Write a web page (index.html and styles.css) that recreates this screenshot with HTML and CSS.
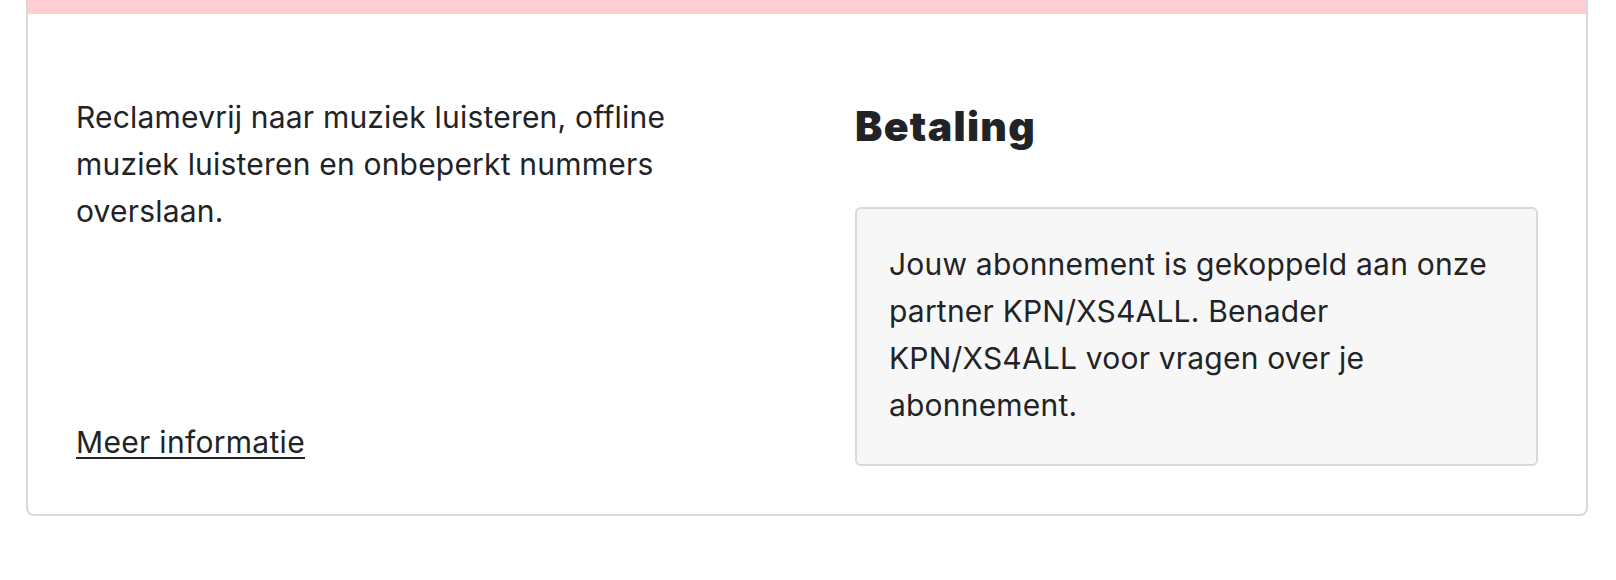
FILE: index.html
```html
<!DOCTYPE html>
<html lang="nl">
<head>
  <meta charset="UTF-8">
  <meta name="viewport" content="width=device-width, initial-scale=1.0">
  <title>Abonnement</title>
  <link rel="stylesheet" href="styles.css">
</head>
<body>

  <div class="page">
    <div class="card">
      <div class="card-band"></div>

      <div class="card-body">
        <div class="plan">
          <p class="plan-text">Reclamevrij naar muziek luisteren, offline muziek luisteren en onbeperkt nummers overslaan.</p>
          <a class="plan-link" href="#">Meer informatie</a>
        </div>

        <div class="payment">
          <h2>Betaling</h2>
          <div class="notice">
            <p>Jouw abonnement is gekoppeld aan onze partner KPN/XS4ALL. Benader KPN/XS4ALL voor vragen over je abonnement.</p>
          </div>
        </div>
      </div>
    </div>
  </div>

</body>
</html>
```

FILE: styles.css
```css
/* Basic Reset */
* {
  margin: 0;
  padding: 0;
  box-sizing: border-box;
}

body {
  font-family: 'Inter', 'Liberation Sans', sans-serif;
  color: #222326;
  background: #fff;
}

.page {
  padding: 0 28px 0 26px;
}

.card {
  border: 2px solid #d9d9d9;
  border-top: none;
  border-radius: 0 0 8px 8px;
}

.card-band {
  height: 14px;
  background: #ffcdd2;
}

.card-body {
  display: grid;
  grid-template-columns: 1fr 1fr;
  gap: 96px;
  padding: 80px 48px 48px;
}

.plan {
  display: flex;
  flex-direction: column;
  justify-content: space-between;
}

.plan-text {
  font-size: 30px;
  line-height: 47px;
  letter-spacing: 0.2px;
  max-width: 660px;
}

.plan-link {
  font-size: 30px;
  line-height: 47px;
  letter-spacing: 0.3px;
  color: #222326;
  text-decoration: underline;
  text-decoration-thickness: 2px;
  text-underline-offset: 4px;
  align-self: flex-start;
}

.payment h2 {
  font-size: 41px;
  font-weight: 900;
  line-height: 48px;
  letter-spacing: 1.3px;
  margin-top: 8px;
  margin-bottom: 57px;
}

.notice {
  background: #f7f7f7;
  border: 2px solid #d9d9d9;
  border-radius: 6px;
  padding: 32px 32px 35px;
}

.notice p {
  font-size: 30px;
  line-height: 47px;
  letter-spacing: 0.2px;
}
```
